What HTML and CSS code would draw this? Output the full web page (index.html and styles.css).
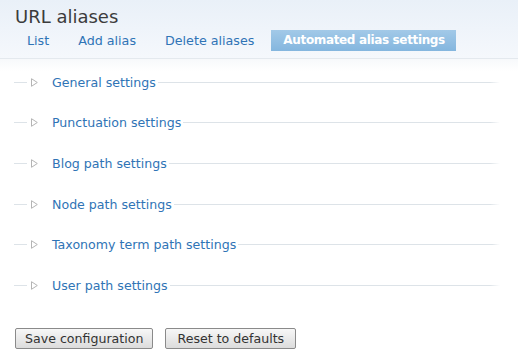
FILE: index.html
```html
<!DOCTYPE html>
<html>
<head>
<meta charset="utf-8">
<link rel="stylesheet" href="styles.css">
</head>
<body>
<div class="header">
  <h1 class="title">URL aliases</h1>
  <ul class="tabs">
    <li class="tab"><a href="#">List</a></li>
    <li class="tab"><a href="#">Add alias</a></li>
    <li class="tab"><a href="#">Delete aliases</a></li>
    <li class="tab active"><a href="#">Automated alias settings</a></li>
  </ul>
</div>
<div class="content">
  <div class="fieldsets">
    <div class="fs"><span class="lead"></span><span class="legend"><svg class="tri" width="7" height="9" viewBox="0 0 7 9"><path d="M0.5 0.7 L6.3 4.5 L0.5 8.3 Z" fill="none" stroke="#b4b4b4" stroke-width="1"/></svg><a href="#">General settings</a></span><span class="rule"></span></div>
    <div class="fs"><span class="lead"></span><span class="legend"><svg class="tri" width="7" height="9" viewBox="0 0 7 9"><path d="M0.5 0.7 L6.3 4.5 L0.5 8.3 Z" fill="none" stroke="#b4b4b4" stroke-width="1"/></svg><a href="#">Punctuation settings</a></span><span class="rule"></span></div>
    <div class="fs"><span class="lead"></span><span class="legend"><svg class="tri" width="7" height="9" viewBox="0 0 7 9"><path d="M0.5 0.7 L6.3 4.5 L0.5 8.3 Z" fill="none" stroke="#b4b4b4" stroke-width="1"/></svg><a href="#">Blog path settings</a></span><span class="rule"></span></div>
    <div class="fs"><span class="lead"></span><span class="legend"><svg class="tri" width="7" height="9" viewBox="0 0 7 9"><path d="M0.5 0.7 L6.3 4.5 L0.5 8.3 Z" fill="none" stroke="#b4b4b4" stroke-width="1"/></svg><a href="#">Node path settings</a></span><span class="rule"></span></div>
    <div class="fs"><span class="lead"></span><span class="legend"><svg class="tri" width="7" height="9" viewBox="0 0 7 9"><path d="M0.5 0.7 L6.3 4.5 L0.5 8.3 Z" fill="none" stroke="#b4b4b4" stroke-width="1"/></svg><a href="#">Taxonomy term path settings</a></span><span class="rule"></span></div>
    <div class="fs"><span class="lead"></span><span class="legend"><svg class="tri" width="7" height="9" viewBox="0 0 7 9"><path d="M0.5 0.7 L6.3 4.5 L0.5 8.3 Z" fill="none" stroke="#b4b4b4" stroke-width="1"/></svg><a href="#">User path settings</a></span><span class="rule"></span></div>
  </div>
  <div class="actions">
    <button class="btn">Save configuration</button>
    <button class="btn">Reset to defaults</button>
  </div>
</div>
</body>
</html>
```

FILE: styles.css
```css
html, body {
  margin: 0;
  padding: 0;
  background: #fff;
  font-family: "DejaVu Sans", Verdana, sans-serif;
}
.header {
  height: 59px;
  border-bottom: 1px solid #e4e9ee;
  background: linear-gradient(#e9f0f8, #f5f8fc);
  box-sizing: border-box;
  padding-top: 6px;
}
.title {
  margin: 0 0 0 15px;
  font-size: 18px;
  font-weight: normal;
  color: #3c3c3c;
  line-height: 22px;
}
.tabs {
  list-style: none;
  margin: 2px 0 0 15px;
  padding: 0;
  display: flex;
  gap: 5px;
}
.tab a {
  display: block;
  padding: 0 12px;
  height: 21px;
  line-height: 21px;
  font-size: 12.7px;
  color: #2f74b6;
  text-decoration: none;
}
.tab.active a {
  background: linear-gradient(#a2c9e8, #84b6de);
  color: #fff;
  font-weight: bold;
  font-size: 12px;
  letter-spacing: -0.35px;
  padding: 0 11px 0 12px;
}
.content {
  background: linear-gradient(#f7f9fb, #fff 12px);
}
.fieldsets {
  padding-top: 3px;
}
.fs {
  height: 40.6px;
  display: flex;
  align-items: center;
  padding: 0 18px 0 14px;
}
.lead {
  width: 13px;
  height: 1px;
  background: #dde3e8;
}
.legend {
  display: flex;
  align-items: center;
  padding: 0 2px 0 4px;
}
.tri {
  display: block;
  margin-right: 14px;
}
.legend a {
  font-size: 12.6px;
  color: #2f74b6;
  text-decoration: none;
}
.rule {
  flex: 1;
  height: 1px;
  background: linear-gradient(to right, #dde3e8 97%, #fff);
}
.actions {
  display: flex;
  gap: 12px;
  padding: 22px 0 0 15px;
}
.btn {
  height: 21px;
  padding: 0 9px;
  border: 1px solid #8a8a8a;
  border-radius: 2px;
  background: linear-gradient(#f7f7f7, #dcdcdc);
  font-family: "DejaVu Sans", Verdana, sans-serif;
  font-size: 12.6px;
  color: #333;
  line-height: 19px;
}
.btn + .btn {
  padding: 0 11px;
}
```
